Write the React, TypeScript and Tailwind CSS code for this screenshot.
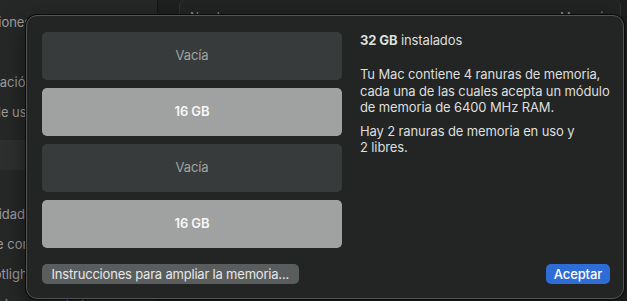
const font = { fontFamily: 'Inter, "Noto Sans", sans-serif' };

const sideItems = [
  { label: 'Notificaciones', active: false },
  { label: '', active: false },
  { label: 'Concentración', active: false },
  { label: 'Tiempo de uso', active: false },
  { label: 'sep', active: false },
  { label: '', active: true },
  { label: '', active: false },
  { label: 'Accesibilidad', active: false },
  { label: 'Centro de control', active: false },
  { label: 'Siri y Spotlight', active: false },
  { label: 'Privacidad y seguridad', active: false },
];

const slots = [
  { label: 'Vacía', used: false },
  { label: '16 GB', used: true },
  { label: 'Vacía', used: false },
  { label: '16 GB', used: true },
];

function Slot({ label, used }: { label: string; used: boolean }) {
  return (
    <div
      className={
        used
          ? 'h-[48px] rounded-[5px] bg-[#a0a2a1] flex items-center justify-center text-[13px] font-semibold text-[#f7f7f7]'
          : 'h-[48px] rounded-[5px] bg-[#383b3b] flex items-center justify-center text-[13px] text-[#a2a4a4]'
      }
    >
      {label}
    </div>
  );
}

export default function App() {
  return (
    <div className="relative w-[627px] h-[301px] overflow-hidden bg-[#1e1f1f] text-[13px]" style={font}>
      {/* background settings window */}
      <div className="flex h-full">
        <div className="w-[158px] h-full shrink-0 bg-[#262727] border-r border-[#141515] pt-[8px] overflow-hidden">
          {sideItems.map((it, i) => (
            <div
              key={i}
              className={
                it.label === 'sep'
                  ? 'h-[12px]'
                  : it.active
                  ? 'h-[30px] flex items-center bg-[#2e3030] text-[#c8c8c8]'
                  : 'h-[30px] flex items-center text-[#9d9e9e]'
              }
            >
              {it.label !== 'sep' && <span className="ml-[-57px] whitespace-nowrap">{it.label}</span>}
            </div>
          ))}
        </div>
        <div className="flex-1 pl-[21px] pr-[6px] pt-0">
          <div className="h-[120px] -mt-[2px] rounded-[8px] border border-[#323434] bg-[#222323] px-[10px] pt-[9px] flex justify-between text-[12px] text-[#8d8e8e]">
            <span>Nombre</span>
            <span>Memoria</span>
          </div>
        </div>
      </div>

      {/* memory dialog */}
      <div className="absolute left-[26px] top-[15px] w-[598px] h-[284px] rounded-[11px] border border-[#515453] bg-[#222524] shadow-[0_0_0_1px_#0a0b0b,0_8px_24px_rgba(0,0,0,0.5)] flex flex-col pl-[15px] pr-[13px] pt-[16px] pb-[14px] tracking-[-0.12px]">
        <div className="flex">
          <div className="w-[300px] shrink-0 flex flex-col gap-[8px]">
            {slots.map((s, i) => (
              <Slot key={i} label={s.label} used={s.used} />
            ))}
          </div>
          <div className="ml-[18px] text-[13px] leading-[16px] text-[#dedfdf] whitespace-nowrap">
            <p>
              <span className="font-bold">32 GB</span> instalados
            </p>
            <p className="mt-[18px] leading-[16.5px]">
              Tu Mac contiene 4 ranuras de memoria,
              <br />
              cada una de las cuales acepta un módulo
              <br />
              de memoria de 6400 MHz RAM.
            </p>
            <p className="mt-[7px] leading-[16.5px]">
              Hay 2 ranuras de memoria en uso y
              <br />2 libres.
            </p>
          </div>
        </div>
        <div className="mt-auto flex items-end justify-between">
          <button className="h-[20px] px-[9.5px] rounded-[5px] bg-[#5a5d5d] text-[13px] leading-[20px] text-[#e6e7e7] tracking-[-0.2px]">
            Instrucciones para ampliar la memoria...
          </button>
          <button className="h-[20px] w-[64px] rounded-[5px] bg-[#2f6dd6] text-[13px] leading-[20px] font-medium text-white">
            Aceptar
          </button>
        </div>
      </div>
    </div>
  );
}
